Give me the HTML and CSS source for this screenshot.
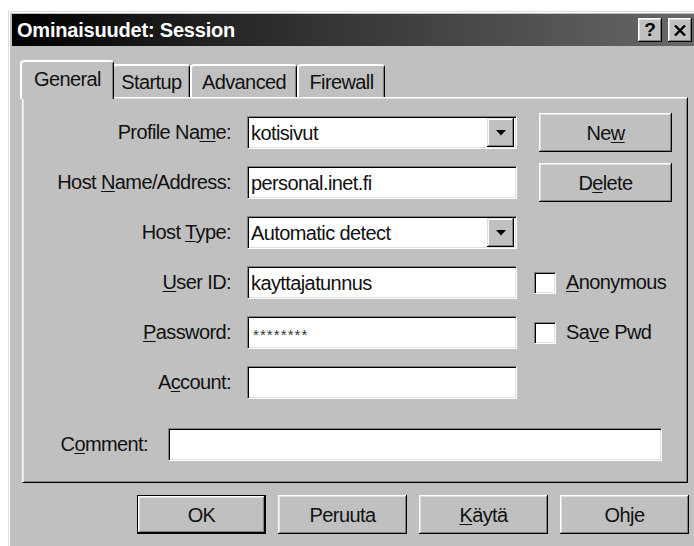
FILE: index.html
```html
<!DOCTYPE html>
<html lang="fi">
<head>
<meta charset="utf-8">
<title>Ominaisuudet: Session</title>
<link rel="stylesheet" href="styles.css">
</head>
<body>
<div class="window">
  <div class="titlebar">
    <span class="title">Ominaisuudet: Session</span>
    <div class="caption-btns">
      <span class="cbtn help">?</span>
      <span class="cbtn close">
        <svg width="12" height="11" viewBox="0 0 12 11"><path d="M1 0.5 L11 10.5 M11 0.5 L1 10.5" stroke="#000" stroke-width="2.4" fill="none"/></svg>
      </span>
    </div>
  </div>

  <div class="tabs">
    <div class="tab active tab-general">General</div>
    <div class="tab tab-startup">Startup</div>
    <div class="tab tab-advanced">Advanced</div>
    <div class="tab tab-firewall">Firewall</div>
  </div>

  <div class="panel">
    <div class="form">
      <label class="lbl">Profile Na<u>m</u>e:</label>
      <div class="field combo"><span class="val">kotisivut</span><span class="drop"><svg width="10" height="6" viewBox="0 0 10 6"><path d="M0 0 H10 L5 5.5 Z" fill="#000"/></svg></span></div>
      <div class="side"><button class="btn side-btn">Ne<u>w</u></button></div>

      <label class="lbl">Host <u>N</u>ame/Address:</label>
      <div class="field"><span class="val">personal.inet.fi</span></div>
      <div class="side"><button class="btn side-btn">D<u>e</u>lete</button></div>

      <label class="lbl">Host <u>T</u>ype:</label>
      <div class="field combo"><span class="val">Automatic detect</span><span class="drop"><svg width="10" height="6" viewBox="0 0 10 6"><path d="M0 0 H10 L5 5.5 Z" fill="#000"/></svg></span></div>
      <div class="side"></div>

      <label class="lbl"><u>U</u>ser ID:</label>
      <div class="field"><span class="val">kayttajatunnus</span></div>
      <div class="side check"><span class="box"></span><span><u>A</u>nonymous</span></div>

      <label class="lbl"><u>P</u>assword:</label>
      <div class="field pwd"><span class="val">********</span></div>
      <div class="side check"><span class="box"></span><span>Sa<u>v</u>e Pwd</span></div>

      <label class="lbl">A<u>c</u>count:</label>
      <div class="field"><span class="val"></span></div>
      <div class="side"></div>
    </div>

    <div class="comment-row">
      <label class="lbl comment-lbl">C<u>o</u>mment:</label>
      <div class="field comment-field"></div>
    </div>
  </div>

  <div class="actions">
    <button class="btn action default">OK</button>
    <button class="btn action">Peruuta</button>
    <button class="btn action"><u>K</u>äytä</button>
    <button class="btn action">Ohje</button>
  </div>
</div>
</body>
</html>
```

FILE: styles.css
```css
html, body {
  margin: 0;
  padding: 0;
  overflow: hidden;
  background: #fff;
}

body {
  width: 694px;
  height: 546px;
  font-family: "Liberation Sans", Arial, sans-serif;
  font-size: 20px;
  letter-spacing: -0.6px;
  color: #111;
}

u {
  text-decoration-thickness: 1px;
  text-underline-offset: 2px;
}

/* dialog frame */
.window {
  box-sizing: border-box;
  margin: 11px 0 0 8px;
  width: 700px;
  height: 535px;
  padding: 2px 0 0 3px;
  background: #c0c0c0;
  border-top: 1px solid #dcdcdc;
  border-left: 1px solid #dcdcdc;
  box-shadow: inset 1px 1px #fff;
}

.titlebar {
  height: 32px;
  display: flex;
  align-items: center;
  padding: 0 16px 0 5px;
  background: linear-gradient(90deg, #000 0%, #2a2a2a 35%, #6a6a6a 100%);
}

.title {
  color: #fff;
  font-weight: bold;
  font-size: 20px;
  letter-spacing: -0.2px;
}

.caption-btns {
  margin-left: auto;
  display: flex;
  gap: 6px;
}

.cbtn {
  box-sizing: border-box;
  width: 24px;
  height: 24px;
  display: flex;
  align-items: center;
  justify-content: center;
  background: #c0c0c0;
  color: #000;
  font-weight: bold;
  font-size: 19px;
  letter-spacing: 0;
  box-shadow: inset -1px -1px #000, inset 1px 1px #fff, inset -2px -2px #808080, inset 2px 2px #dfdfdf;
}

/* tab strip */
.tabs {
  display: flex;
  align-items: flex-end;
  height: 37px;
  margin: 14px 0 0 10px;
}

.tab {
  box-sizing: border-box;
  height: 33px;
  display: flex;
  align-items: center;
  justify-content: center;
  padding-top: 2px;
  background: #c0c0c0;
  border-top: 2px solid #fff;
  border-left: 2px solid #fff;
  border-right: 1px solid #000;
  border-radius: 4px 4px 0 0;
  box-shadow: inset -1px 0 #808080;
}

.tab-general { width: 90px; }
.tab-startup { width: 78px; }
.tab-advanced { width: 107px; }
.tab-firewall { width: 88px; }

.tab.active {
  width: 94px;
  height: 39px;
  margin: 0 -2px -2px;
  padding: 0 0 2px;
  position: relative;
  z-index: 1;
}

/* property page */
.panel {
  box-sizing: border-box;
  width: 666px;
  margin-left: 10px;
  padding: 18px 0 21px;
  border: 1px solid;
  border-color: #fff #000 #000 #fff;
  box-shadow: inset 1px 1px #dfdfdf, inset -1px -1px #808080;
}

.form {
  display: grid;
  grid-template-columns: 223px 287px auto;
  grid-auto-rows: 33px;
  row-gap: 17px;
  margin-left: 1px;
}

.lbl {
  align-self: center;
  text-align: right;
  padding-right: 16px;
  white-space: nowrap;
}

.field {
  box-sizing: border-box;
  width: 270px;
  height: 33px;
  display: flex;
  align-items: center;
  padding: 1px 2px 1px 3px;
  background: #fff;
  border: 1px solid;
  border-color: #808080 #fff #fff #808080;
  box-shadow: inset 1px 1px #000, inset -1px -1px #dfdfdf;
  white-space: nowrap;
}

.field .val {
  flex: 1;
  padding-top: 2px;
}

.pwd .val {
  font-size: 15px;
  letter-spacing: 1.1px;
  padding: 3px 0 0 2px;
  color: #333;
}

.drop {
  box-sizing: border-box;
  width: 27px;
  height: 29px;
  display: flex;
  align-items: center;
  justify-content: center;
  background: #c0c0c0;
  box-shadow: inset -1px -1px #000, inset 1px 1px #dfdfdf, inset -2px -2px #808080, inset 2px 2px #fff;
}

.side {
  display: flex;
  align-items: center;
}

.side-btn {
  width: 133px;
  height: 39px;
  margin: -3px 0 -3px 5px;
}

.check {
  gap: 10px;
}

.box {
  box-sizing: border-box;
  width: 22px;
  height: 22px;
  background: #fff;
  border: 1px solid;
  border-color: #808080 #fff #fff #808080;
  box-shadow: inset 1px 1px #000, inset -1px -1px #dfdfdf;
}

.comment-row {
  display: flex;
  align-items: center;
  margin: 29px 0 0 1px;
}

.comment-lbl {
  width: 124px;
  box-sizing: border-box;
  padding-right: 0;
}

.comment-field {
  width: 494px;
  margin-left: 20px;
}

/* push buttons */
.btn {
  box-sizing: border-box;
  padding: 2px 0 0;
  border: none;
  background: #c0c0c0;
  font: inherit;
  letter-spacing: inherit;
  color: #111;
  box-shadow: inset -1px -1px #000, inset 1px 1px #fff, inset -2px -2px #808080, inset 2px 2px #dfdfdf;
}

.actions {
  display: flex;
  gap: 12px;
  margin: 12px 0 0 125px;
}

.action {
  width: 129px;
  height: 39px;
}

.action.default {
  border: 1px solid #000;
}
```
